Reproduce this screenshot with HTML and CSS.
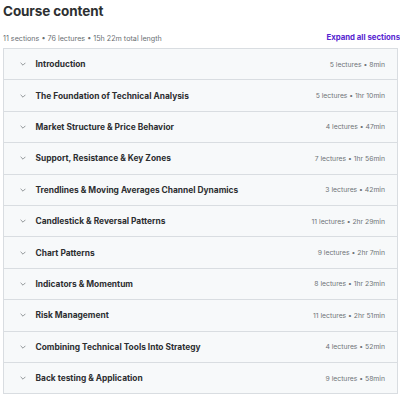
FILE: index.html
```html
<!DOCTYPE html>
<html lang="en">
<head>
  <meta charset="UTF-8" />
  <title>Course content</title>
  <link rel="stylesheet" href="styles.css">
</head>
<body>
  <div class="course">
    <h2 class="course-title">Course content</h2>

    <div class="course-bar">
      <span class="course-info">11 sections • 76 lectures • 15h 22m total length</span>
      <button class="expand-btn">Expand all sections</button>
    </div>

    <ul class="sections">
      <li class="section">
        <span class="chevron"><svg viewBox="0 0 10 6"><path d="M1 1l4 4 4-4" /></svg></span>
        <span class="section-name">Introduction</span>
        <span class="section-meta">5 lectures • 8min</span>
      </li>
      <li class="section">
        <span class="chevron"><svg viewBox="0 0 10 6"><path d="M1 1l4 4 4-4" /></svg></span>
        <span class="section-name">The Foundation of Technical Analysis</span>
        <span class="section-meta">5 lectures • 1hr 10min</span>
      </li>
      <li class="section">
        <span class="chevron"><svg viewBox="0 0 10 6"><path d="M1 1l4 4 4-4" /></svg></span>
        <span class="section-name">Market Structure &amp; Price Behavior</span>
        <span class="section-meta">4 lectures • 47min</span>
      </li>
      <li class="section">
        <span class="chevron"><svg viewBox="0 0 10 6"><path d="M1 1l4 4 4-4" /></svg></span>
        <span class="section-name">Support, Resistance &amp; Key Zones</span>
        <span class="section-meta">7 lectures • 1hr 56min</span>
      </li>
      <li class="section">
        <span class="chevron"><svg viewBox="0 0 10 6"><path d="M1 1l4 4 4-4" /></svg></span>
        <span class="section-name">Trendlines &amp; Moving Averages Channel Dynamics</span>
        <span class="section-meta">3 lectures • 42min</span>
      </li>
      <li class="section">
        <span class="chevron"><svg viewBox="0 0 10 6"><path d="M1 1l4 4 4-4" /></svg></span>
        <span class="section-name">Candlestick &amp; Reversal Patterns</span>
        <span class="section-meta">11 lectures • 2hr 29min</span>
      </li>
      <li class="section">
        <span class="chevron"><svg viewBox="0 0 10 6"><path d="M1 1l4 4 4-4" /></svg></span>
        <span class="section-name">Chart Patterns</span>
        <span class="section-meta">9 lectures • 2hr 7min</span>
      </li>
      <li class="section">
        <span class="chevron"><svg viewBox="0 0 10 6"><path d="M1 1l4 4 4-4" /></svg></span>
        <span class="section-name">Indicators &amp; Momentum</span>
        <span class="section-meta">8 lectures • 1hr 23min</span>
      </li>
      <li class="section">
        <span class="chevron"><svg viewBox="0 0 10 6"><path d="M1 1l4 4 4-4" /></svg></span>
        <span class="section-name">Risk Management</span>
        <span class="section-meta">11 lectures • 2hr 51min</span>
      </li>
      <li class="section">
        <span class="chevron"><svg viewBox="0 0 10 6"><path d="M1 1l4 4 4-4" /></svg></span>
        <span class="section-name">Combining Technical Tools Into Strategy</span>
        <span class="section-meta">4 lectures • 52min</span>
      </li>
      <li class="section">
        <span class="chevron"><svg viewBox="0 0 10 6"><path d="M1 1l4 4 4-4" /></svg></span>
        <span class="section-name">Back testing &amp; Application</span>
        <span class="section-meta">9 lectures • 58min</span>
      </li>
    </ul>
  </div>
</body>
</html>
```

FILE: styles.css
```css
html, body {
  margin: 0;
  padding: 0;
  background: #fff;
  font-family: Inter, "Noto Sans", sans-serif;
  color: #2d2f31;
}

.course {
  padding: 0 2px 0 3px;
}

.course-title {
  margin: 0;
  padding-top: 1px;
  font-size: 13.5px;
  font-weight: 700;
  line-height: 20px;
  letter-spacing: -0.1px;
}

.course-bar {
  display: flex;
  justify-content: space-between;
  align-items: center;
  height: 18px;
  margin-top: 8px;
  margin-bottom: 1px;
}

.course-info {
  font-size: 7.2px;
  color: #6a6f73;
}

.expand-btn {
  background: none;
  border: none;
  padding: 0 0 2px;
  margin-right: -2px;
  font-family: inherit;
  font-size: 7.8px;
  font-weight: 700;
  color: #5624d0;
  cursor: pointer;
}

.sections {
  list-style: none;
  margin: 0;
  padding: 0;
  border: 1px solid #d9dde1;
  border-bottom: none;
}

.section {
  display: flex;
  align-items: center;
  height: 30.4px;
  padding: 0 12px 0 16px;
  background: #f7f9fa;
  border-bottom: 1px solid #d9dde1;
}

.chevron {
  display: flex;
  width: 15.5px;
}

.chevron svg {
  width: 6px;
  height: 4px;
  fill: none;
  stroke: #6a6f73;
  stroke-width: 1.2;
}

.section-name {
  flex: 1;
  font-size: 8.4px;
  font-weight: 700;
  color: #2d2f31;
}

.section-meta {
  font-size: 6.8px;
  color: #6f7478;
}
```
